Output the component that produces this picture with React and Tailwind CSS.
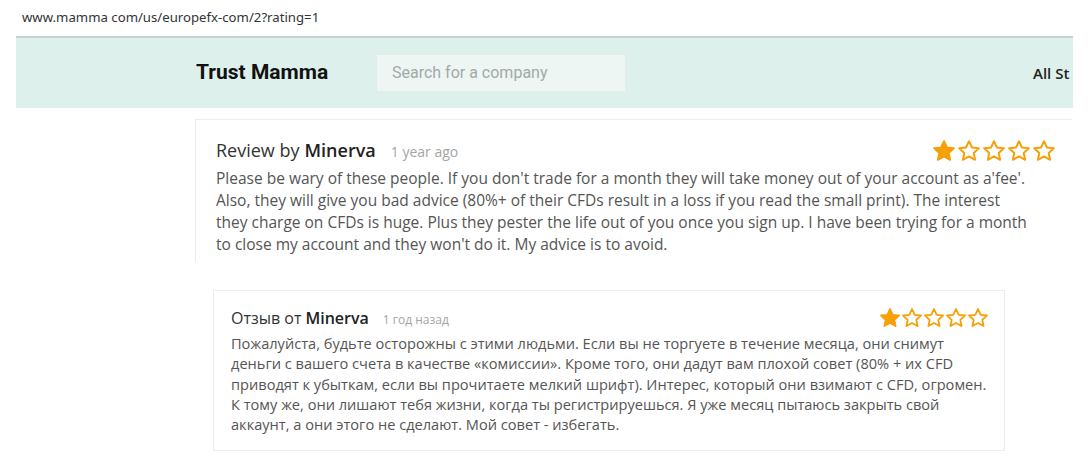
import React from "react";

function Star({ filled, size }) {
  return (
    <svg width={size} height={size} viewBox="0 0 24 24" className="shrink-0">
      <path
        d="M12 2.2l2.95 6.3 6.85.8-5.07 4.7 1.36 6.8L12 17.4l-6.09 3.4 1.36-6.8L2.2 9.3l6.85-.8z"
        fill={filled ? "#f6a10a" : "#fff"}
        stroke="#f6a10a"
        strokeWidth="2"
        strokeLinejoin="round"
      />
    </svg>
  );
}

function Stars({ size, gap }) {
  return (
    <div className={`flex ${gap}`}>
      <Star filled size={size} />
      <Star size={size} />
      <Star size={size} />
      <Star size={size} />
      <Star size={size} />
    </div>
  );
}

const os = { fontFamily: '"Open Sans", "Noto Sans", sans-serif' };

export default function App() {
  return (
    <div className="w-[1090px] h-[458px] bg-white overflow-hidden" style={os}>
      <div
        className="h-[36px] pl-[22px] pt-[8px] text-[13.2px] text-[#333]"
        style={{ fontFamily: '"Noto Sans", "Open Sans", sans-serif' }}
      >
        www.mamma com/us/europefx-com/2?rating=1
      </div>
      <div className="ml-[16px] w-[1057px] h-[72px] border-t-2 border-[#c2d2d3] bg-[#def0ec] flex items-center overflow-hidden">
        <div
          className="ml-[180px] w-[180px] text-[21px] font-bold text-[#111] whitespace-nowrap shrink-0"
          style={{ fontFamily: "Roboto, sans-serif" }}
        >
          Trust Mamma
        </div>
        <div
          className="w-[250px] h-[38px] bg-[#eef6f4] border border-[#e3ecea] flex items-center pl-[15px] text-[16px] text-[#a3a9a8] shrink-0"
          style={{ fontFamily: '"Liberation Sans Narrow", Roboto, sans-serif' }}
        >
          Search for a company
        </div>
        <div className="ml-[407px] text-[15px] font-semibold text-[#222] whitespace-nowrap">
          All St
        </div>
      </div>

      <div className="ml-[195px] mt-[11px] w-[877px] h-[143px] border-l border-t border-[#ececec] pl-[20px] pr-[16px] pt-[17px]">
        <div className="flex items-center justify-between">
          <div className="flex items-baseline">
            <span className="text-[18px] text-[#333]">Review by </span>
            <span className="text-[18px] text-[#222] font-semibold ml-[5px]">Minerva</span>
            <span className="text-[14px] text-[#a5a5a5] ml-[15px]">1 year ago</span>
          </div>
          <Stars size={24} gap="gap-[1px]" />
        </div>
        <div className="text-[15.5px] leading-[22px] text-[#555] mt-[3px] whitespace-nowrap">
          <div>Please be wary of these people. If you don't trade for a month they will take money out of your account as a'fee'.</div>
          <div>Also, they will give you bad advice (80%+ of their CFDs result in a loss if you read the small print). The interest</div>
          <div>they charge on CFDs is huge. Plus they pester the life out of you once you sign up. I have been trying for a month</div>
          <div>to close my account and they won't do it. My advice is to avoid.</div>
        </div>
      </div>

      <div className="ml-[213px] mt-[28px] w-[792px] h-[161px] border border-[#ececec] pl-[17px] pr-[15px] pt-[15px]">
        <div className="flex items-center justify-between">
          <div className="flex items-baseline">
            <span className="text-[16px] text-[#333]">Отзыв от </span>
            <span className="text-[16px] text-[#222] font-semibold ml-[4px]">Minerva</span>
            <span className="text-[12px] text-[#a5a5a5] ml-[14px]">1 год назад</span>
          </div>
          <Stars size={22} gap="gap-0" />
        </div>
        <div className="text-[14.6px] leading-[20.3px] text-[#555] mt-[3px] whitespace-nowrap">
          <div>Пожалуйста, будьте осторожны с этими людьми. Если вы не торгуете в течение месяца, они снимут</div>
          <div>деньги с вашего счета в качестве «комиссии». Кроме того, они дадут вам плохой совет (80% + их CFD</div>
          <div>приводят к убыткам, если вы прочитаете мелкий шрифт). Интерес, который они взимают с CFD, огромен.</div>
          <div>К тому же, они лишают тебя жизни, когда ты регистрируешься. Я уже месяц пытаюсь закрыть свой</div>
          <div>аккаунт, а они этого не сделают. Мой совет - избегать.</div>
        </div>
      </div>
    </div>
  );
}
